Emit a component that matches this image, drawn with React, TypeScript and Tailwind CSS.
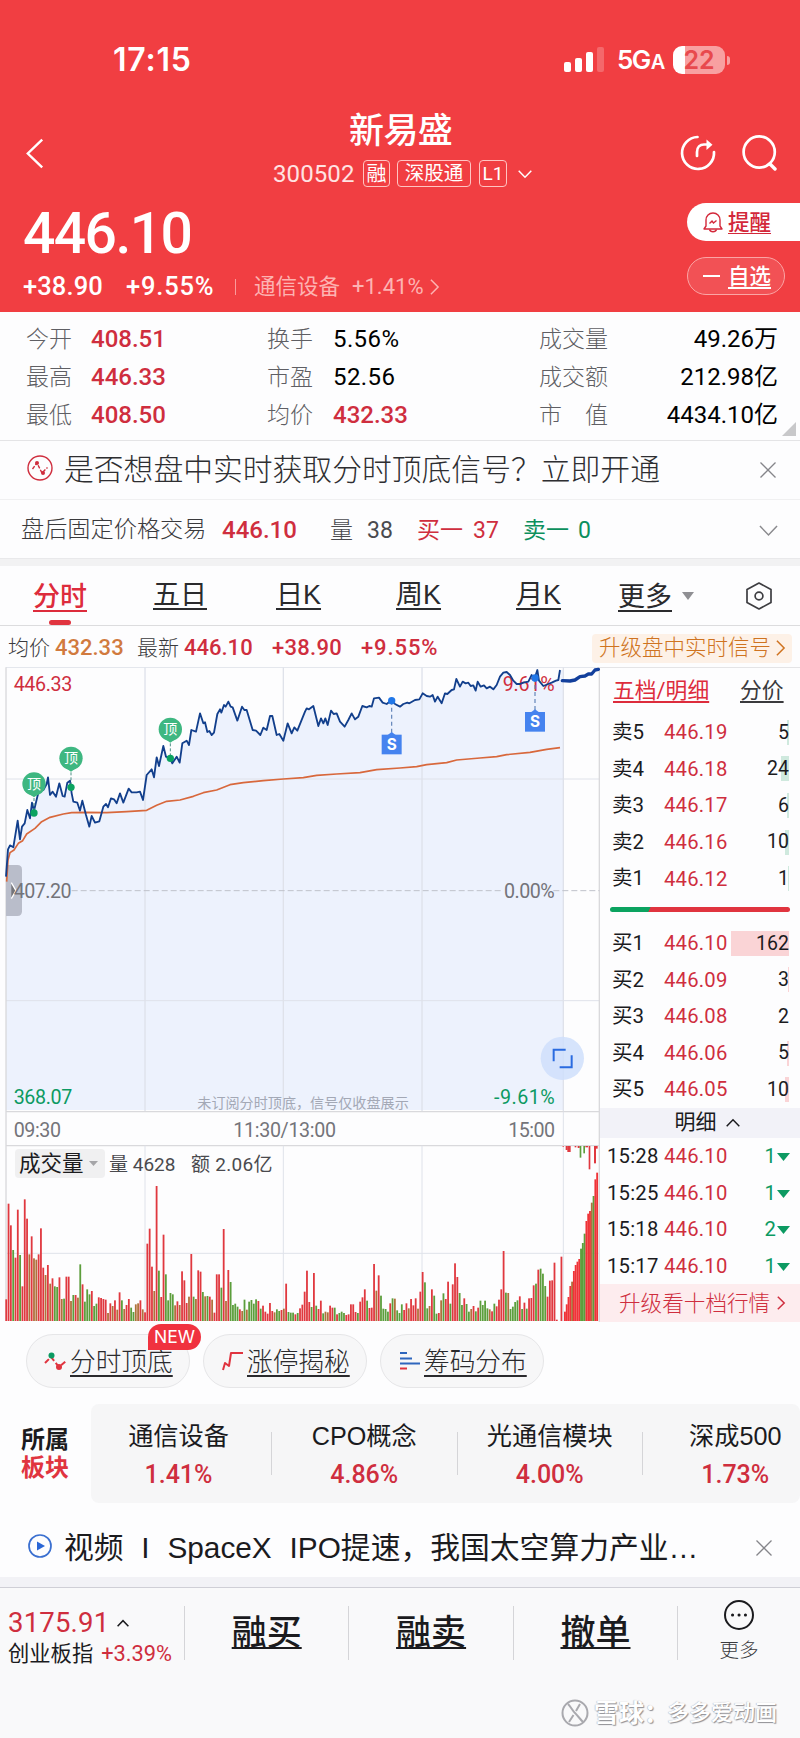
import type { ReactNode } from 'react'
import clsx from 'clsx'

const STATS = [
  ['今开', '408.51', '换手', '5.56%', '成交量', '49.26万'],
  ['最高', '446.33', '市盈', '52.56', '成交额', '212.98亿'],
  ['最低', '408.50', '均价', '432.33', '市　值', '4434.10亿'],
]

const ASKS = [
  { label: '卖5', price: '446.19', volume: 5, depth: 2 },
  { label: '卖4', price: '446.18', volume: 24, depth: 8 },
  { label: '卖3', price: '446.17', volume: 6, depth: 2 },
  { label: '卖2', price: '446.16', volume: 10, depth: 4 },
  { label: '卖1', price: '446.12', volume: 1, depth: 1 },
]

const BIDS = [
  { label: '买1', price: '446.10', volume: 162, depth: 58 },
  { label: '买2', price: '446.09', volume: 3, depth: 1 },
  { label: '买3', price: '446.08', volume: 2, depth: 0 },
  { label: '买4', price: '446.06', volume: 5, depth: 2 },
  { label: '买5', price: '446.05', volume: 10, depth: 4 },
]

const TRADES = [
  ['15:28', '446.10', '1'],
  ['15:25', '446.10', '1'],
  ['15:18', '446.10', '2'],
  ['15:17', '446.10', '1'],
]

const SECTORS = [
  ['通信设备', '1.41%'],
  ['CPO概念', '4.86%'],
  ['光通信模块', '4.00%'],
  ['深成500', '1.73%'],
]

// Chart space: three units per pixel, minute bars 6.94 units apart.
const PRICE_LINE =
  '18,950 24,868 30,856 40,862 53,782 60,838 66,800 74,790 82,750 90,775 96,728 102,752 112,710 122,678 130,690 140,672 144,652 150,705 158,695 168,710 178,670 188,708 194,710 202,668 210,662 215,700 220,725 232,728 240,752 247,722 258,765 268,800 275,768 285,788 298,784 310,740 318,732 324,742 333,715 342,718 350,730 360,700 370,728 386,686 395,697 410,697 420,695 429,720 440,645 455,628 462,652 470,592 477,618 490,558 498,590 510,595 517,610 530,590 539,608 547,550 560,542 567,555 574,510 588,515 600,460 610,490 615,487 622,516 628,513 635,525 642,518 652,462 660,448 664,458 672,435 677,440 685,425 692,440 698,442 712,482 726,440 733,450 740,450 758,510 768,512 781,525 790,503 800,510 810,468 817,468 830,525 838,522 850,542 863,490 875,520 883,502 892,512 915,455 920,445 927,448 940,438 955,498 963,475 970,490 976,475 983,495 993,452 1001,462 1010,460 1020,485 1034,500 1045,480 1055,460 1065,478 1075,470 1087,438 1100,442 1108,438 1115,440 1122,415 1137,413 1148,428 1160,432 1175,420 1185,432 1200,440 1210,432 1222,428 1228,430 1245,420 1258,418 1268,400 1280,408 1290,410 1298,405 1305,425 1313,410 1325,430 1335,400 1342,402 1355,390 1362,388 1369,357 1380,380 1388,365 1397,370 1405,368 1412,378 1420,376 1427,392 1433,365 1442,380 1452,376 1460,385 1470,380 1480,388 1490,375 1500,350 1510,338 1520,336 1530,345 1540,362 1550,372 1560,372 1570,368 1585,365 1595,345 1603,358 1612,330 1617,362 1630,378 1645,372 1655,368 1668,362 1675,360 1680,330'

const AVERAGE_LINE =
  '20,965 24,900 30,878 42,870 55,850 68,842 80,822 105,805 125,785 150,772 190,762 215,758 260,757 320,758 380,755 440,751 470,736 500,724 540,720 580,709 610,698 650,690 690,674 730,668 790,662 850,657 910,653 950,646 1010,642 1080,638 1130,629 1200,624 1250,620 1280,614 1340,608 1370,600 1440,594 1490,590 1520,584 1590,577 1640,568 1680,563'

const AFTER_LINE =
  '1687,362 1710,363 1725,360 1740,350 1755,348 1765,342 1775,342 1785,330 1795,328'

const MINUTE_VOLUMES =
  'r65 r352 r287 g213 r190 r334 g198 r104 r365 r307 o200 r254 o188 o184 r200 r278 r160 o138 r168 o112 r128 g104 g102 r131 o66 g67 r133 r133 o60 g78 r78 o70 g170 r110 g58 g95 g80 r90 g45 g52 r71 r69 r66 r64 o24 r53 o45 r62 o34 r86 g62 o36 r48 r66 g40 g27 o50 o53 r62 o35 r26 r232 r277 r163 o90 r405 g151 r72 r259 g140 g62 g84 g80 o47 r59 o48 r149 r122 r54 o73 r201 g73 o66 r152 r148 g87 o74 g75 r73 o64 r25 r140 r140 g100 r276 o60 r153 g117 g48 g52 g43 r35 o30 g64 o34 g58 g63 g52 g65 r60 g37 r46 r28 r22 r54 r30 o26 g35 g30 r33 o37 r112 g27 g25 g25 r20 g24 r38 r49 r88 r151 r57 g42 r144 g46 r36 r61 g23 o28 o26 r46 r40 g40 r20 g24 g28 g24 r18 r20 r50 r50 r27 g24 r58 r71 r95 g61 r39 r40 r171 o91 r137 g76 g37 g36 g28 r53 g68 o67 g32 g24 g50 r33 r53 o38 r66 r47 r68 o37 r88 r147 g116 g38 o45 r95 g76 g22 r24 o62 g83 r66 r118 g52 r110 r173 r132 g84 g48 r68 g51 g28 o36 r45 g29 r40 g61 g48 g61 g38 o35 r29 g52 r44 r64 r95 r210 g85 o84 g36 g43 g57 g62 r74 g36 r55 g37 r68 r69 r107 g112 r154 g157 g142 g105 r73 r121 r122 r175 r4 r0 r193'.split(' ')

const AFTER_VOLUMES =
  'r28 r50 r72 r105 o118 r150 r168 r178 r186 g217 g234 g262 r300 r322 r330 o355 g375 r425 r445'.split(' ')

const AFTER_PENDING = [
  [1688, 3, 3, 'r'],
  [1697, 6, 12, 'r'],
  [1702, 10, 18, 'r'],
  [1724, 5, 4, 'r'],
  [1733, 6, 6, 'r'],
  [1739, 5, 35, 'g'],
  [1750, 5, 22, 'g'],
  [1756, 8, 4, 'r'],
  [1766, 5, 70, 'r'],
  [1782, 6, 52, 'r'],
  [1788, 5, 8, 'r'],
] as const

const BAR_COLORS: Record<string, string> = { r: '#e0383f', g: '#5c9e3c', o: '#b0703c' }

const BASELINE = 2283

type ChevronProps = { dir: 'left' | 'right' | 'up' | 'down'; className?: string; weight?: number }

function Chevron({ dir, className, weight = 1.5 }: ChevronProps) {
  const path = {
    left: 'M9 1L1 10L9 19',
    right: 'M1 1L9 10L1 19',
    up: 'M1 9L10 1L19 9',
    down: 'M1 1L10 9L19 1',
  }[dir]
  const box = dir === 'left' || dir === 'right' ? '0 0 10 20' : '0 0 20 10'
  return (
    <svg viewBox={box} preserveAspectRatio="none" fill="none" className={clsx('flex-none overflow-visible', className)}>
      <path d={path} stroke="currentColor" vectorEffect="non-scaling-stroke" strokeWidth={weight} />
    </svg>
  )
}

function Cross() {
  return (
    <svg viewBox="0 0 16 16" className="h-4 w-4 flex-none" fill="none">
      <path d="M0.5 0.5L15.5 15.5M15.5 0.5L0.5 15.5" stroke="#85858a" strokeWidth={1.3} />
    </svg>
  )
}

function StatusBar() {
  return (
    <div className="flex h-[120px] items-center pl-[113px] text-white">
      <span className="w-[451px] font-[Inter] text-[32px] font-semibold tracking-[0.8px]">17:15</span>
      <svg viewBox="0 0 40 26" className="h-[26px] w-[40px] flex-none" fill="#fff">
        <rect x="0" y="15" width="7" height="10" rx="2" />
        <rect x="11" y="11" width="7" height="14" rx="2" />
        <rect x="22" y="5" width="7" height="20" rx="2" />
        <rect x="33" y="0" width="7" height="25" rx="2" opacity=".22" />
      </svg>
      <span className="ml-[13px] w-[56px] whitespace-nowrap font-[Inter] text-[26px] font-semibold tracking-[-1.6px]">
        5G<span className="ml-[1px] text-[20px]">A</span>
      </span>
      <div className="flex h-[28px] w-[52px] items-center justify-center rounded-[9px] bg-[linear-gradient(90deg,#fff_23%,#f8a0a1_23%)] font-[Inter] text-[25px] font-semibold text-[#e8494d]">
        22
      </div>
      <div className="ml-[2px] h-[9px] w-[3px] rounded-r bg-[#f8a0a1]" />
    </div>
  )
}

function Badge({ children, className }: { children: ReactNode; className?: string }) {
  return (
    <span
      className={clsx(
        'flex h-[27px] items-center justify-center whitespace-nowrap rounded-[4px] border border-[#ffc4c2]',
        className,
      )}
    >
      {children}
    </span>
  )
}

function Header() {
  return (
    <header className="h-[312px] bg-[#f13e42] text-white">
      <StatusBar />
      <div className="flex h-[66px] items-center">
        <Chevron dir="left" weight={2.4} className="ml-[26px] h-[31px] w-[18px] text-white" />
        <div className="ml-[229px] mt-[-3px] flex w-[260px] flex-col">
          <h1 className="pl-[76px] text-[35px] font-medium leading-[32px] tracking-[-0.6px]">新易盛</h1>
          <div className="mt-[12px] flex items-center whitespace-nowrap">
            <span className="w-[90px] text-[24px] tracking-[0.1px] text-[#ffe3e2]">300502</span>
            <Badge className="w-[27px] text-[20px]">融</Badge>
            <Badge className="ml-[7px] w-[74px] text-[19.5px]">深股通</Badge>
            <Badge className="ml-[8px] w-[28px] text-[19px]">L1</Badge>
            <Chevron dir="down" className="ml-[11px] h-[8px] w-[14px]" />
          </div>
        </div>
        <svg viewBox="0 0 36 36" className="ml-[147px] h-[36px] w-[36px] flex-none" fill="none" stroke="#fff" strokeWidth={2.7}>
          <path d="M17.5 2A16 16 0 1 0 34 17" strokeLinecap="round" />
          <path d="M17 21V17C17 12 20 9.5 24 9.5H28" strokeLinecap="round" />
          <path d="M26.5 4.5L32.5 9.7L26.5 15Z" fill="#fff" stroke="none" />
        </svg>
        <svg viewBox="0 0 36 36" className="ml-[26px] h-[36px] w-[36px] flex-none" fill="none" stroke="#fff" strokeWidth={2.7}>
          <circle cx="17.2" cy="17" r="15.6" />
          <path d="M28 29L33 34" strokeLinecap="round" strokeWidth={3.4} />
        </svg>
      </div>
      <div className="flex h-[126px]">
        <div className="w-[687px] pt-[20px]">
          <div className="pl-[23px] text-[57px] font-medium leading-[56px] tracking-[-1.6px]">446.10</div>
          <div className="mt-[12px] flex h-[26px] items-center pl-[23px] text-[25.5px]">
            <span className="w-[103px] font-medium tracking-[0.1px]">+38.90</span>
            <span className="w-[109px] font-medium tracking-[0.8px]">+9.55%</span>
            <span className="mr-[18px] h-[16px] w-px bg-[#fa9a9b]" />
            <span className="w-[98px] text-[21.5px] text-[#fdb3b2]">通信设备</span>
            <span className="w-[78px] text-[22px] text-[#fdb3b2]">+1.41%</span>
            <Chevron dir="right" className="h-[16px] w-[9px] text-[#fdb3b2]" />
          </div>
        </div>
        <div className="flex w-[113px] flex-col pt-[17px]">
          <div className="flex h-[38px] items-center rounded-l-full bg-white pl-[16px] text-[#d3283a]">
            <svg viewBox="0 0 20 21" className="mr-[5px] h-[21px] w-[20px] flex-none" fill="none" stroke="#d3283a" strokeWidth={1.4}>
              <path d="M1 17H19L17 14V8C17 4 14 1 10 1S3 4 3 8V14Z" strokeLinejoin="round" />
              <path d="M6.5 17.5C7.5 20.5 12.5 20.5 13.5 17.5" />
              <path d="M6.5 11.5L9 9L10.5 11L13.5 8.5" />
            </svg>
            <span className="pt-[2px] text-[21.5px] font-medium underline decoration-1 underline-offset-[3px]">提醒</span>
          </div>
          <div className="mt-[16px] flex h-[38px] w-[98px] items-center rounded-full border border-[#fba5a5] bg-[#f25155] pl-[15px]">
            <span className="mr-[8px] h-[2px] w-[17px] bg-white" />
            <span className="pt-[2px] text-[21.5px] font-medium underline decoration-2 underline-offset-[3px]">自选</span>
          </div>
        </div>
      </div>
    </header>
  )
}

function Stats() {
  return (
    <section className="relative h-[129px] border-b border-[#e4e4e6] pt-[8px] text-[24px] text-[#1b1b1e]">
      {STATS.map(([a, av, b, bv, c, cv]) => (
        <div key={a} className="flex h-[38px] items-center pl-[26px] pr-[22px]">
          <span className="w-[65px] text-[23px] font-light text-[#5f5f64]">{a}</span>
          <span className="w-[176px] font-medium text-[#cf2e3e]">{av}</span>
          <span className="w-[66px] text-[23px] font-light text-[#5f5f64]">{b}</span>
          <span className={clsx('w-[206px]', b === '均价' ? 'font-medium text-[#cf2e3e]' : 'tracking-[0.4px] text-black')}>{bv}</span>
          <span className="whitespace-nowrap text-[23px] font-light text-[#5f5f64]">{c}</span>
          <span className="ml-auto text-black">{cv}</span>
        </div>
      ))}
      <svg viewBox="0 0 14 14" className="absolute bottom-[4px] right-[4px] h-[14px] w-[14px]" fill="#c8c8ca">
        <path d="M14 0V14H0Z" />
      </svg>
    </section>
  )
}

function Notices() {
  return (
    <section>
      <div className="flex h-[59px] items-center border-b border-[#f0f0f1] pl-[27px] pr-[24px]">
        <svg viewBox="0 0 26 26" className="mt-[-4px] h-[26px] w-[26px] flex-none" fill="none" stroke="#cf2e3e" strokeWidth={1.4}>
          <circle cx="13" cy="13" r="12" />
          <path d="M5.5 14L10 8L15 18L20.5 12.5" strokeDasharray="3.5 1.5" />
          <circle cx="10" cy="8" r="2" fill="#cf2e3e" stroke="none" />
          <circle cx="16" cy="18" r="2" fill="#cf2e3e" stroke="none" />
        </svg>
        <span className="ml-[11px] flex-1 whitespace-nowrap text-[29.8px] font-light text-[#2e2e31]">
          是否想盘中实时获取分时顶底信号？立即开通
        </span>
        <Cross />
      </div>
      <div className="flex h-[59px] items-center border-b border-[#e9e9eb] pl-[21px] pr-[22px] pt-[2px] text-[24px] text-[#4a4a4e]">
        <span className="w-[201px] text-[23.2px] font-light text-[#3a3a3d]">盘后固定价格交易</span>
        <span className="w-[108px] font-medium text-[#cf2e3e]">446.10</span>
        <span className="w-[37px] text-[23px] font-light">量</span>
        <span className="w-[50px] text-[23px]">38</span>
        <span className="w-[56px] text-[23px] text-[#cf2e3e]">买一</span>
        <span className="w-[50px] text-[23px] text-[#cf2e3e]">37</span>
        <span className="w-[55px] text-[23px] text-[#0c8f5d]">卖一</span>
        <span className="text-[23px] text-[#0c8f5d]">0</span>
        <Chevron dir="down" className="ml-auto h-[11px] w-[19px] text-[#8a8a8e]" />
      </div>
      <div className="h-[7px] bg-[#f2f2f3]" />
    </section>
  )
}

function Tabs() {
  const link = 'pt-[3px] underline decoration-[1.5px] underline-offset-[4px]'
  return (
    <nav className="flex h-[60px] items-center border-b border-[#dcdcde] pl-[33px] font-['Liberation_Sans','Noto_Sans_CJK_SC',sans-serif] text-[27px] text-[#2a2a2d]">
      <div className="relative flex h-full w-[120px] items-center font-medium text-[#dd2c3c]">
        <span className={link}>分时</span>
        <span className="absolute bottom-0 left-[16px] h-[5px] w-[22px] rounded-full bg-[#e0343f]" />
      </div>
      <div className="w-[123px]"><span className={link}>五日</span></div>
      <div className="w-[120px]"><span className={link}>日K</span></div>
      <div className="w-[120px]"><span className={link}>周K</span></div>
      <div className="w-[102px]"><span className={link}>月K</span></div>
      <span className={link}>更多</span>
      <svg viewBox="0 0 12 8" className="ml-[10px] h-[8px] w-[12px]" fill="#8f8f93">
        <path d="M0 0H12L6 8Z" />
      </svg>
      <svg viewBox="0 0 26 28" className="ml-auto mr-[28px] h-[28px] w-[26px]" fill="none" stroke="#3d3d41" strokeWidth={1.7}>
        <path d="M13 1L25 7.5V20.5L13 27L1 20.5V7.5Z" strokeLinejoin="round" />
        <circle cx="13" cy="14" r="3.9" />
      </svg>
    </nav>
  )
}

function Quote() {
  return (
    <div className="flex h-[41px] items-center whitespace-nowrap pl-[8px] pt-[3px] text-[22px] text-[#cf2e3e]">
      <span className="w-[47px] text-[21px] font-light text-[#3a3a3d]">均价</span>
      <span className="w-[82px] font-medium text-[#d17a3e]">432.33</span>
      <span className="w-[47px] text-[21px] font-light text-[#3a3a3d]">最新</span>
      <span className="w-[88px] font-medium">446.10</span>
      <span className="w-[89px] font-medium tracking-[0.3px]">+38.90</span>
      <span className="w-[231px] font-medium tracking-[0.9px]">+9.55%</span>
      <span className="flex h-[29px] w-[200px] items-center justify-center rounded-[4px] bg-[#fdf1e7] text-[21.5px] font-light text-[#cf7320]">
        升级盘中实时信号
        <Chevron dir="right" className="ml-[5px] h-[16px] w-[9px]" />
      </span>
    </div>
  )
}

function TopPin({ x, y }: { x: number; y: number }) {
  return (
    <g>
      <path d={`M${x - 27} ${y + 21}L${x} ${y + 40}L${x + 27} ${y + 21}Z`} fill="#3eb781" />
      <circle cx={x} cy={y} r={35} fill="#3eb781" />
      <text x={x} y={y + 15} textAnchor="middle" fontSize={42} fill="#fff">顶</text>
      <path d={`M${x} ${y + 42}V${y + 84}`} stroke="#4d8f86" strokeWidth={3} strokeDasharray="9 6" />
      <circle cx={x} cy={y + 87} r={11} fill="#0ba360" />
    </g>
  )
}

function SellMark({ x, y }: { x: number; y: number }) {
  return (
    <g>
      <path d={`M${x} ${y}V${y + 100}`} stroke="#5f82b8" strokeWidth={3.5} strokeDasharray="12 9" />
      <circle cx={x} cy={y} r={11} fill="#2177e8" />
      <path d={`M${x - 12} ${y + 103}L${x} ${y + 94}L${x + 12} ${y + 103}Z`} fill="#4583ef" />
      <rect x={x - 30} y={y + 102} width={60} height={59} fill="#4583ef" />
      <text x={x} y={y + 147} textAnchor="middle" fontSize={46} fontWeight={700} fill="#fff" className="font-[Inter]">S</text>
    </g>
  )
}

function Chart() {
  return (
    <div className="relative h-[655px] w-[600px] flex-none">
      <svg viewBox="0 321 1800 1965" className="block h-[655px] w-[600px]" fill="none">
        <path d={`M18 1650V950L${PRICE_LINE.replace('18,950 ', '')}L1690 330V1650Z`} fill="#edf2fd" />
        <g stroke="#dfe2ea" strokeWidth={4}>
          <path d="M18 322H1798M18 657H1798M18 1322H1798" strokeWidth={3} />
          <path d="M435 322V1654M850 322V1654M1266 322V1654M1690 322V1654" />
          <path d="M18 322V2283M1798 322V2286M18 1655H1798M18 1757H1798" stroke="#d9d9dc" />
          <path d="M435 1757V2283M850 1757V2283M1266 1757V2283M1690 1655V2283M18 2080H1798" strokeWidth={3} />
        </g>
        <path d="M215 992H1510M1660 992H1798" stroke="#bfc2ca" strokeWidth={3} strokeDasharray="18 9" />

        <g fill="#cf2e3e" fontSize={59}>
          <text x={41} y={393} textLength={176}>446.33</text>
          <text x={1508} y={393} textLength={156}>9.61%</text>
        </g>
        <g fill="#74747a" fontSize={59}>
          <path d="M18 915H52Q66 915 66 929V1054Q66 1068 52 1068H18Z" fill="#b9bdca" />
          <path d="M34 968L48 992L34 1016" stroke="#fff" strokeWidth={4} />
          <text x={41} y={1013} textLength={174}>407.20</text>
          <text x={1512} y={1013} textLength={152}>0.00%</text>
          <text x={41} y={1730} textLength={142}>09:30</text>
          <text x={700} y={1730} textLength={308}>11:30/13:00</text>
          <text x={1525} y={1730} textLength={140}>15:00</text>
        </g>
        <g fill="#0c9a62" fontSize={59}>
          <text x={41} y={1631} textLength={176}>368.07</text>
          <text x={1482} y={1631} textLength={182}>-9.61%</text>
        </g>
        <text x={592} y={1645} fontSize={42.3} fill="#a3a8b5">未订阅分时顶底，信号仅收盘展示</text>

        <polyline points={AVERAGE_LINE} stroke="#d8683c" strokeWidth={5} strokeLinejoin="round" />
        <polyline points={PRICE_LINE} stroke="#123f8c" strokeWidth={5.5} strokeLinejoin="round" />
        <polyline points={AFTER_LINE} stroke="#123f9c" strokeWidth={10} strokeLinejoin="round" strokeLinecap="round" />

        <TopPin x={102} y={672} />
        <TopPin x={213} y={595} />
        <TopPin x={511} y={508} />
        <SellMark x={1175} y={422} />
        <SellMark x={1605} y={354} />

        {MINUTE_VOLUMES.map((bar, i) => {
          const h = Number(bar.slice(1))
          return <rect key={i} x={16 + i * 6.94} y={BASELINE - h} width={5.4} height={h} fill={BAR_COLORS[bar[0]]} />
        })}
        {AFTER_VOLUMES.map((bar, i) => {
          const h = Number(bar.slice(1))
          return <rect key={i} x={1692 + i * 5.37} y={BASELINE - h} width={5.6} height={h} fill={bar[0] === 'r' ? '#ef3338' : BAR_COLORS[bar[0]]} />
        })}
        {AFTER_PENDING.map(([x, w, h, c]) => (
          <rect key={x} x={x} y={1758} width={w} height={h} fill={BAR_COLORS[c]} />
        ))}

        <circle cx={1687} cy={1495} r={65} fill="#cfdffb" opacity={0.85} />
        <path d="M1661 1504V1469H1697M1679 1522H1715V1486" stroke="#2a6be0" strokeWidth={6} />
      </svg>
      <div className="absolute left-[15px] top-[482px] flex items-center whitespace-nowrap text-[19px] text-[#4a4a4e]">
        <span className="flex h-[29px] w-[90px] items-center rounded-[4px] bg-[#f0f0f1] pl-[4px] text-[21.5px] text-[#1b1b1e]">
          成交量
          <svg viewBox="0 0 9 5" className="ml-[5px] h-[5px] w-[9px]" fill="#a5a5a8">
            <path d="M0 0H9L4.5 5Z" />
          </svg>
        </span>
        <span className="ml-[4px] w-[82px] pt-[2px]">量 4628</span>
        <span className="pt-[2px] tracking-[0.3px]">额 2.06亿</span>
      </div>
    </div>
  )
}

function BookRow({ label, price, volume, depth, side }: (typeof ASKS)[number] & { side: 'ask' | 'bid' }) {
  return (
    <div className="flex h-[36.6px] items-center pl-[12px] pr-[11px] text-[20.3px] text-[#1b1b1e]">
      <span className="w-[52px] text-[20.5px]">{label}</span>
      <span className="tracking-[0.2px] text-[#cf2e3e]">{price}</span>
      <span className="relative ml-auto flex h-[25px] w-[58px] items-center justify-end">
        <span
          className={clsx('absolute right-0 top-0 h-full', side === 'ask' ? 'bg-[#cfe9de]' : 'bg-[#fad4d6]')}
          style={{ width: depth }}
        />
        <span className="relative text-[19.5px]">{volume}</span>
      </span>
    </div>
  )
}

function OrderBook() {
  return (
    <aside className="w-[200px] overflow-hidden border-t border-[#e4e4e6]">
      <div className="flex h-[46px] items-center whitespace-nowrap pl-[13px] text-[21.8px]">
        <span className="w-[127px] text-[#dd2c3c] underline decoration-[1.5px] underline-offset-[3px]">五档/明细</span>
        <span className="text-[#3a3a3d] underline decoration-[1.5px] underline-offset-[3px]">分价</span>
      </div>
      {ASKS.map((row) => (
        <BookRow key={row.label} {...row} side="ask" />
      ))}
      <div className="mb-[13px] ml-[10px] mt-[10px] h-[5px] w-[180px] rounded-full bg-[linear-gradient(115deg,#0ba360_22%,#e0343f_22.5%)]" />
      {BIDS.map((row) => (
        <BookRow key={row.label} {...row} side="bid" />
      ))}
      <div className="flex h-[30px] items-center justify-center bg-[#f2f2f8] pl-[14px] text-[21px] text-[#1b1b1e]">
        明细
        <Chevron dir="up" className="ml-[9px] h-[8px] w-[14px]" />
      </div>
      {TRADES.map(([time, price, count]) => (
        <div key={time} className="flex h-[36.6px] items-center pl-[7px] pr-[10px] text-[20.3px]">
          <span className="w-[57px] tracking-[0.2px] text-[#1b1b1e]">{time}</span>
          <span className="tracking-[0.2px] text-[#cf2e3e]">{price}</span>
          <span className="ml-auto text-[#0c9a62]">{count}</span>
          <svg viewBox="0 0 13 8" className="ml-[1px] mt-[2px] h-[8px] w-[13px]" fill="#0c9a62">
            <path d="M0 0H13L6.5 8Z" />
          </svg>
        </div>
      ))}
      <div className="flex h-[38px] items-center whitespace-nowrap bg-[#fdecee] pl-[19px] text-[21.6px] font-light text-[#cf2e3e]">
        升级看十档行情
        <Chevron dir="right" className="ml-[7px] h-[14px] w-[8px]" />
      </div>
    </aside>
  )
}

function ToolPill({ label, icon, badge }: { label: string; icon: ReactNode; badge?: string }) {
  return (
    <div className="relative flex h-[54px] w-[164px] items-center rounded-full border border-[#e6e6e8] bg-[#f7f7f8] pl-[16px]">
      <svg viewBox="0 0 24 20" className="mr-[3px] h-[20px] w-[24px] flex-none" fill="none" strokeWidth={2}>
        {icon}
      </svg>
      <span className="whitespace-nowrap pt-[3px] text-[25.7px] font-light text-[#2a2a2d] underline decoration-[1.5px] underline-offset-[4px]">
        {label}
      </span>
      {badge && (
        <span className="absolute left-[121px] top-[-11px] flex h-[26px] w-[53px] items-center justify-center rounded-full rounded-bl-none bg-[#f0323f] font-[Inter] text-[17.5px] text-white">
          {badge}
        </span>
      )}
    </div>
  )
}

function Tools() {
  return (
    <section className="flex gap-[13px] pl-[26px] pt-[12px]">
      <ToolPill
        label="分时顶底"
        badge="NEW"
        icon={
          <>
            <path d="M2 12L8 6L16 16L23 10" stroke="#e0343f" strokeDasharray="5.5 2.5" />
            <circle cx="8.5" cy="4.5" r="3" fill="#0c9a62" />
            <circle cx="16" cy="16" r="3" fill="#e0343f" />
          </>
        }
      />
      <ToolPill
        label="涨停揭秘"
        icon={<path d="M3 19L5 12L9 15L11 2H23" stroke="#e0343f" strokeLinejoin="round" />}
      />
      <ToolPill
        label="筹码分布"
        icon={
          <>
            <path d="M3 2H10M3 7.5H15M3 12.5H23" stroke="#2f66bd" />
            <path d="M3 17.5H10" stroke="#e0343f" />
          </>
        }
      />
    </section>
  )
}

function Sectors() {
  return (
    <section className="mt-[16px] flex h-[99px]">
      <div className="flex w-[91px] flex-col justify-center pl-[21px] text-[24px] font-bold leading-[28px]">
        <span className="text-[#1b1b1e]">所属</span>
        <span className="text-[#e0343f]">板块</span>
      </div>
      <div className="flex w-[709px] items-center overflow-hidden rounded-[8px] bg-[#f6f6f7]">
        {SECTORS.map(([name, change], i) => (
          <div
            key={name}
            className={clsx(
              'flex h-[43px] flex-none flex-col items-center justify-center gap-[12px] whitespace-nowrap pt-[4px]',
              i === 0 ? 'w-[180px] pr-[5px]' : 'w-[185.5px] border-l border-[#d5d5d8]',
            )}
          >
            <span className="font-['Liberation_Sans','Noto_Sans_CJK_SC',sans-serif] text-[25.2px] text-[#1b1b1e]">{name}</span>
            <span className="text-[25px] font-medium text-[#cf2e3e]">{change}</span>
          </div>
        ))}
      </div>
    </section>
  )
}

function VideoBanner() {
  return (
    <section className="flex h-[74px] items-center pl-[28px] pr-[28px] pt-[15px]">
      <svg viewBox="0 0 24 24" className="mt-[-3px] h-[24px] w-[24px] flex-none" fill="none" stroke="#3a6fd0" strokeWidth={1.7}>
        <circle cx="12" cy="12" r="11" />
        <path d="M9 7.5L17 12L9 16.5Z" fill="#2a66d6" stroke="none" />
      </svg>
      <span className="ml-[12px] flex-1 whitespace-pre font-['Liberation_Sans','Noto_Sans_CJK_SC',sans-serif] text-[29.8px] text-[#1b1b1e] [word-spacing:0.6px]">
        视频  I  SpaceX  IPO提速，我国太空算力产业…
      </span>
      <Cross />
    </section>
  )
}

function BottomBar() {
  return (
    <footer className="h-[151px] border-t border-[#cfcfd6] bg-[#f9f9fa]">
      <div className="flex h-[90px] items-center">
        <div className="flex w-[184px] flex-col pl-[8px] pt-[8px]">
          <div className="flex items-center text-[27.5px] tracking-[0.2px] text-[#cf2e3e]">
            3175.91
            <Chevron dir="up" className="ml-[8px] h-[7px] w-[12px] text-[#1b1b1e]" />
          </div>
          <div className="mt-[6px] flex items-center whitespace-nowrap text-[21.3px] text-[#1b1b1e]">
            创业板指<span className="ml-[8px] text-[21.8px] text-[#cf2e3e]">+3.39%</span>
          </div>
        </div>
        {['融买', '融卖', '撤单'].map((action) => (
          <div key={action} className="flex h-[54px] w-[164.4px] items-center justify-center border-l border-[#d5d5d8]">
            <span className="text-[35px] font-medium text-[#1b1b1e] underline decoration-2 underline-offset-[2px]">{action}</span>
          </div>
        ))}
        <div className="flex h-[54px] flex-1 flex-col items-center justify-center border-l border-[#d5d5d8] pb-[5px]">
          <svg viewBox="0 0 30 30" className="h-[30px] w-[30px] flex-none" fill="none" stroke="#1b1b1e" strokeWidth={2}>
            <circle cx="15" cy="15" r="14" />
            <path d="M8.5 15H8.6M15 15H15.1M21.4 15H21.5" strokeWidth={3} strokeLinecap="round" />
          </svg>
          <span className="mt-[11px] text-[19.5px] font-light text-[#3a3a3d]">更多</span>
        </div>
      </div>
      <div className="flex h-[60px] items-center justify-end whitespace-nowrap pr-[23px] pt-[10px] text-[22px] font-medium text-white [text-shadow:1px_1px_1px_#8f8f94,-0.5px_-0.5px_1px_#b5b5ba]">
        <svg viewBox="0 0 28 28" className="mr-[5px] h-[28px] w-[28px]" fill="none" stroke="#a9a9ae" strokeWidth={2}>
          <circle cx="14" cy="14" r="12.5" />
          <path d="M7 5C10 8 11 11 14 14S19 20 22 23M19 5L15 12M12.5 16L8 23" />
        </svg>
        <span className="w-[73px] text-[25px] font-bold">雪球：</span>
        <span>多多爱动画</span>
      </div>
    </footer>
  )
}

export default function App() {
  return (
    <div className="h-[1738px] w-[800px] overflow-hidden bg-[#fdfdfe] font-[Roboto,'Noto_Sans_CJK_SC',sans-serif] leading-none">
      <Header />
      <Stats />
      <Notices />
      <Tabs />
      <Quote />
      <main className="flex h-[655px]">
        <Chart />
        <OrderBook />
      </main>
      <Tools />
      <Sectors />
      <VideoBanner />
      <div className="h-[10px] bg-[#f2f2f6]" />
      <BottomBar />
    </div>
  )
}
